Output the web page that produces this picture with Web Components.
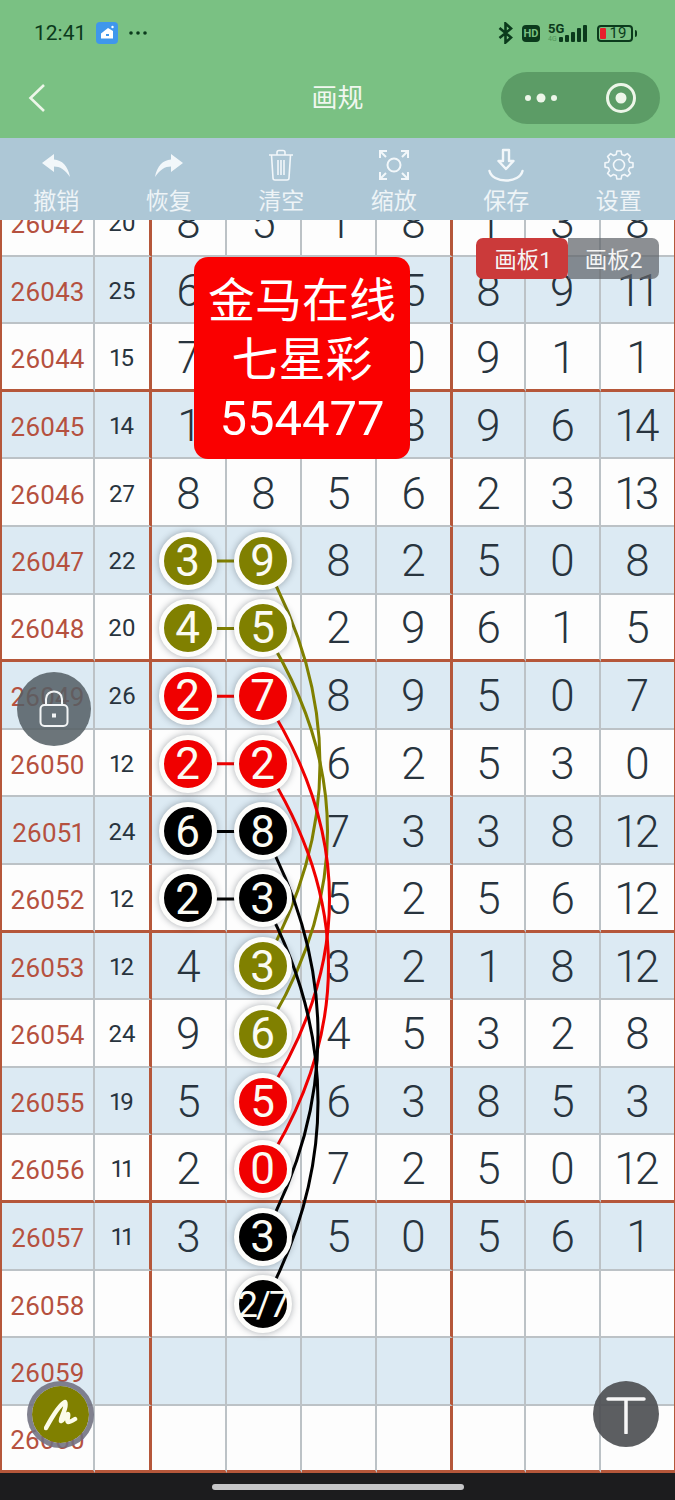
<!DOCTYPE html>
<html lang="zh">
<head>
<meta charset="utf-8">
<title>画规</title>
<style>
  html, body { margin: 0; padding: 0; background: #1c1c1e; }
  body { font-family: Roboto, "Noto Sans CJK SC", sans-serif; }
</style>
</head>
<body>
<draw-page></draw-page>

<script>
const CJK = 'Roboto, "Noto Sans CJK SC", sans-serif'

// olive / red / black marks, in the order they are joined up on the board
const COLORS = { o: "#808000", r: "#f00000", k: "#000000" }

const ROWS = [
  ["26042", "20", "8", "5", "1", "8", "1", "3", "8"],
  ["26043", "25", "6", "", "", "5", "8", "9", "11"],
  ["26044", "15", "7", "", "", "0", "9", "1", "1"],
  ["26045", "14", "1", "", "", "8", "9", "6", "14"],
  ["26046", "27", "8", "8", "5", "6", "2", "3", "13"],
  ["26047", "22", "o3", "o9", "8", "2", "5", "0", "8"],
  ["26048", "20", "o4", "o5", "2", "9", "6", "1", "5"],
  ["26049", "26", "r2", "r7", "8", "9", "5", "0", "7"],
  ["26050", "12", "r2", "r2", "6", "2", "5", "3", "0"],
  ["26051", "24", "k6", "k8", "7", "3", "3", "8", "12"],
  ["26052", "12", "k2", "k3", "5", "2", "5", "6", "12"],
  ["26053", "12", "4", "o3", "3", "2", "1", "8", "12"],
  ["26054", "24", "9", "o6", "4", "5", "3", "2", "8"],
  ["26055", "19", "5", "r5", "6", "3", "8", "5", "3"],
  ["26056", "11", "2", "r0", "7", "2", "5", "0", "12"],
  ["26057", "11", "3", "k3", "5", "0", "5", "6", "1"],
  ["26058", "", "", "k2/7", "", "", "", "", ""],
  ["26059", "", "", "", "", "", "", "", ""],
  ["26060", "", "", "", "", "", "", "", ""]
]

// eight toothed outline for the settings icon
function gearPath(cx, cy, outer, inner) {
  const points = []
  for (let i = 0; i < 8; i++) {
    const a = (i * Math.PI) / 4
    const steps = [[-0.26, inner], [-0.15, outer], [0.15, outer], [0.26, inner]]
    steps.forEach(([offset, r]) => {
      const x = cx + r * Math.sin(a + offset)
      const y = cy - r * Math.cos(a + offset)
      points.push(x.toFixed(1) + " " + y.toFixed(1))
    })
  }
  return "M" + points.join("L") + "Z"
}

class StatusBar extends HTMLElement {
  constructor() {
    super()
    this.attachShadow({ mode: "open" })
    this.shadowRoot.innerHTML = `
      <style>
        :host {
          display: flex;
          align-items: center;
          height: 34px;
          padding: 16px 38px 0 34px;
          color: #0b3a1c;
          font: 400 21px Roboto, sans-serif;
        }
        .left { display: flex; align-items: center; gap: 10px; flex: 1; }
        .right { display: flex; align-items: center; }
        .hd {
          width: 18px; height: 17px; margin: 0 8px 0 9px;
          border-radius: 4px; background: #0b3a1c; color: #7bc184;
          font: 700 11px/17px Roboto, sans-serif; text-align: center;
        }
        .net {
          display: flex; flex-direction: column; width: 11px; height: 20px;
          font: 700 13px/12px Roboto, sans-serif; white-space: nowrap;
        }
        .net small { font: 400 7px/8px Roboto, sans-serif; color: #4f9559; }
        .batt {
          position: relative; width: 32px; height: 13px; margin-left: 10px;
          border: 2px solid #0b3a1c; border-radius: 4px;
          font: 400 15px/13px Roboto, sans-serif; text-align: center;
          text-indent: 6px;
        }
        .batt i {
          position: absolute; left: 1px; top: 1px; width: 6px; height: 11px;
          background: #e8202c; border-radius: 1px;
        }
        .tip { width: 2px; height: 7px; margin-left: 2px; background: #0b3a1c; border-radius: 0 2px 2px 0; }
      </style>
      <div class="left">
        <span>12:41</span>
        <svg width="22" height="22" viewBox="0 0 22 22">
          <rect width="22" height="22" rx="4" fill="#3f97ec"/>
          <path d="M5 11.500 12 6l5 3v7.500H5z" fill="#fff"/>
          <rect x="10" y="12" width="3" height="2" fill="#3f97ec"/>
          <circle cx="16.500" cy="5" r="1.200" fill="#fff"/>
        </svg>
        <svg width="20" height="6" viewBox="0 0 20 6" fill="#0b3a1c">
          <circle cx="3" cy="3" r="1.800"/><circle cx="10" cy="3" r="1.800"/><circle cx="17" cy="3" r="1.800"/>
        </svg>
      </div>
      <div class="right">
        <svg width="15" height="22" viewBox="0 0 15 22" fill="none" stroke="#0b3a1c" stroke-width="2.600">
          <path d="M1.500 6 13 15.500 7.500 20.500V1.500L13 6.500 1.500 16"/>
        </svg>
        <span class="hd">HD</span>
        <span class="net">5G<small>4G</small></span>
        <svg width="28" height="17" viewBox="0 0 28 17" fill="#0b3a1c">
          <rect x="0" y="12" width="4" height="5" rx="1"/>
          <rect x="6" y="10" width="4" height="7" rx="1"/>
          <rect x="12" y="7" width="4" height="10" rx="1"/>
          <rect x="18" y="3" width="4" height="14" rx="1"/>
          <rect x="24" y="0" width="4" height="17" rx="1"/>
        </svg>
        <span class="batt"><i></i>19</span>
        <span class="tip"></span>
      </div>
    `
  }
}

class NavBar extends HTMLElement {
  constructor() {
    super()
    this.attachShadow({ mode: "open" })
    this.shadowRoot.innerHTML = `
      <style>
        :host {
          display: flex;
          align-items: center;
          justify-content: space-between;
          height: 52px;
          padding: 22px 15px 14px 28px;
          position: relative;
        }
        .title {
          position: absolute; left: 0; right: 0; text-align: center;
          font: 400 26px/50px ${CJK}; color: #f0f7ef;
        }
        .capsule {
          display: flex; align-items: center; justify-content: space-between;
          width: 159px; height: 52px; box-sizing: border-box; padding: 0 23px;
          border-radius: 26px; background: #5c9c66;
        }
      </style>
      <svg width="18" height="30" viewBox="0 0 18 30" fill="none" stroke="#edf6e9" stroke-width="2.600">
        <path d="M16 2 2.500 15 16 28"/>
      </svg>
      <span class="title">画规</span>
      <div class="capsule">
        <svg width="34" height="12" viewBox="0 0 34 12" fill="#edf6e9">
          <circle cx="4" cy="6" r="3"/><circle cx="17" cy="6" r="4.500"/><circle cx="30" cy="6" r="3"/>
        </svg>
        <svg width="32" height="32" viewBox="0 0 32 32">
          <circle cx="16" cy="16" r="13.500" fill="none" stroke="#edf6e9" stroke-width="3"/>
          <circle cx="16" cy="16" r="5.500" fill="#edf6e9"/>
        </svg>
      </div>
    `
  }
}

class ToolItem extends HTMLElement {
  constructor() {
    super()
    this.attachShadow({ mode: "open" })
    this.shadowRoot.innerHTML = `
      <style>
        :host {
          display: flex;
          flex-direction: column;
          align-items: center;
          color: #eef4f7;
          font: 400 23px/28px ${CJK};
        }
        .icon { display: flex; align-items: center; justify-content: center; height: 36px; margin-bottom: 5px; }
      </style>
      <div class="icon"><slot name="icon"></slot></div>
      <slot></slot>
    `
  }
}

class ToolBar extends HTMLElement {
  constructor() {
    super()
    this.attachShadow({ mode: "open" })
    this.shadowRoot.innerHTML = `
      <style>
        :host {
          display: grid;
          grid-template-columns: repeat(6, 1fr);
          height: 82px;
          box-sizing: border-box;
          padding-top: 9px;
          background: #adc7d6;
        }
      </style>
      <tool-item>
        <svg slot="icon" width="28" height="23" viewBox="0 0 28 23" fill="#f2f7fa">
          <path d="M0 9 12 0v5.500C20 6 26 12 28 23 23 15.500 18 12.500 12 12.500V18z"/>
        </svg>
        撤销
      </tool-item>
      <tool-item>
        <svg slot="icon" width="28" height="23" viewBox="0 0 28 23" fill="#f2f7fa">
          <path d="M28 9 16 0v5.500C8 6 2 12 0 23 5 15.500 10 12.500 16 12.500V18z"/>
        </svg>
        恢复
      </tool-item>
      <tool-item>
        <svg slot="icon" width="26" height="32" viewBox="0 0 26 32" fill="none" stroke="#f2f7fa" stroke-width="1.600">
          <path d="M1 6h24M9 6V3.500C9 2 10 1.500 11 1.500h4c1 0 2 .5 2 2V6M3.500 6 5 29c0 1 1 2 2 2h12c1 0 2-1 2-2l1.500-23M10 11v15M13 11v15M16 11v15"/>
        </svg>
        清空
      </tool-item>
      <tool-item>
        <svg slot="icon" width="30" height="30" viewBox="0 0 30 30" fill="none" stroke="#f2f7fa" stroke-width="2">
          <circle cx="15" cy="15" r="6.500"/>
          <path d="M1 8V1h7M1 1l6 6M29 8V1h-7M29 1l-6 6M1 22v7h7M1 29l6-6M29 22v7h-7M29 29l-6-6"/>
        </svg>
        缩放
      </tool-item>
      <tool-item>
        <svg slot="icon" width="36" height="34" viewBox="0 0 36 34" fill="none" stroke="#f2f7fa" stroke-width="2.400" stroke-linecap="round" stroke-linejoin="round">
          <path d="M15 2h6v11h4.500L18 21l-7.500-8H15zM1.500 23C3 29 10 32.500 18 32.500S33 29 34.500 23"/>
        </svg>
        保存
      </tool-item>
      <tool-item>
        <svg slot="icon" width="30" height="30" viewBox="0 0 30 30" fill="none" stroke="#f2f7fa" stroke-width="1.600" stroke-linejoin="round">
          <circle cx="15" cy="15" r="5.500"/>
          <path d="${gearPath(15, 15, 14.2, 11)}"/>
        </svg>
        设置
      </tool-item>
    `
  }
}

class BallMark extends HTMLElement {
  constructor() {
    super()
    this.attachShadow({ mode: "open" })
    this.shadowRoot.innerHTML = `
      <style>
        :host {
          display: flex;
          flex: none;
          align-items: center;
          justify-content: center;
          position: relative;
          z-index: 2;
          width: 58px;
          height: 58px;
          margin: 2px 0 0 -2px;
          box-sizing: border-box;
          padding-top: 1px;
          border: 5px solid #fdfdfb;
          border-radius: 50%;
          box-shadow: 0 0 7px rgba(40, 50, 60, .4);
          background: var(--ball, #000);
          color: #fbfbf3;
          font: 400 44px/1 Roboto, sans-serif;
        }
        :host([small]) { font-size: 36px; letter-spacing: -2px; }
      </style>
      <slot></slot>
    `
  }
}

class DrawBoard extends HTMLElement {
  constructor() {
    super()
    this.attachShadow({ mode: "open" })
    this.shadowRoot.innerHTML = `
      <style>
        :host {
          display: block;
          flex: 1;
          position: relative;
          overflow: hidden;
          background: #fdfdfd;
        }
        #rows {
          margin-top: -31px;
          display: grid;
          grid-template-columns: 93px 57px 75px 75px 75px 76px 73px 75px 1fr;
          grid-auto-rows: 67.600px;
          border-left: 2px solid #b5573a;
          border-right: 1px solid #b5573a;
          box-sizing: border-box;
          width: 675px;
        }
        .cell {
          display: flex;
          align-items: center;
          justify-content: center;
          box-sizing: border-box;
          border-right: 2px solid #bcc2c6;
          border-bottom: 2px solid #bcc2c6;
          color: #28343e;
          font: 300 44px/1 Roboto, sans-serif;
          font-variant-numeric: proportional-nums;
          min-width: 0;
        }
        .text { padding-top: 3px; }
        .blue { background: #dceaf3; }
        .period { color: #b5513f; font-size: 26px; font-weight: 400; padding-top: 5px; }
        .sum { font-size: 24px; font-weight: 400; }
        .thick-right { border-right: 3px solid #b5573a; }
        .thick-bottom { border-bottom: 3px solid #b5573a; }
        .no-right { border-right: none; }
        svg {
          position: absolute;
          left: 0;
          top: 0;
          z-index: 1;
          pointer-events: none;
        }
        .tabs {
          position: absolute;
          left: 476px;
          top: 18px;
          z-index: 3;
          display: flex;
          color: #f5f5f5;
          font: 400 22.500px/45px ${CJK};
          text-align: center;
        }
        .on { width: 92px; height: 41px; padding-left: 2px; box-sizing: border-box; background: #cb3a3a; border-radius: 7px; }
        .off { width: 91px; height: 41px; background: rgba(96, 100, 106, .72); border-radius: 0 7px 7px 0; }
        .banner {
          position: absolute;
          left: 194px;
          top: 37px;
          z-index: 3;
          width: 216px;
          height: 202px;
          box-sizing: border-box;
          padding-top: 14px;
          border-radius: 14px;
          background: #fa0000;
          color: #fff;
          font: 400 47px/59px ${CJK};
          text-align: center;
        }
        .banner span { font-size: 49px; }
        .float {
          position: absolute;
          z-index: 4;
          display: flex;
          align-items: center;
          justify-content: center;
          box-sizing: border-box;
          border-radius: 50%;
        }
        .float svg { position: static; }
        .lock { left: 17px; top: 452px; width: 74px; height: 74px; background: rgba(84, 94, 100, .86); }
        .pen {
          left: 27px; top: 1161px; width: 67px; height: 67px;
          background: #808000; background-clip: padding-box;
          border: 5px solid rgba(112, 112, 128, .88);
        }
        .top { left: 593px; top: 1161px; width: 66px; height: 66px; background: rgba(78, 80, 84, .92); }
      </style>
      <div id="rows"></div>
      <svg id="lines" width="675" height="1253" viewBox="0 220 675 1253" fill="none" stroke-width="3"></svg>
      <div class="banner">金马在线<br>七星彩<br><span>554477</span></div>
      <div class="tabs"><span class="on">画板1</span><span class="off">画板2</span></div>
      <div class="float lock">
        <svg width="30" height="38" viewBox="0 0 30 38" fill="none" stroke="#f2f4f5" stroke-width="2">
          <path d="M7 15V9c0-10 16-10 16 0v6"/>
          <rect x="1.500" y="15" width="27" height="21" rx="4"/>
          <rect x="13" y="23.500" width="4" height="4" fill="#f2f4f5" stroke="none"/>
        </svg>
      </div>
      <div class="float pen">
        <svg width="34" height="32" viewBox="0 0 34 32" fill="none" stroke="#fbfbe8" stroke-width="4.500" stroke-linecap="round" stroke-linejoin="round">
          <path d="M2 29C8 18 15 6 21 3c3 5-5 16-4 19 3-1 5-7 7-7 1 3-2 6 0 8 2 0 4-1 7-3"/>
        </svg>
      </div>
      <div class="float top">
        <svg width="40" height="40" viewBox="0 0 40 40" fill="none" stroke="#f7f7f7" stroke-width="3.500" stroke-linecap="round">
          <path d="M2 5h36M20 5v34"/>
        </svg>
      </div>
    `
  }

  connectedCallback() {
    const rows = this.shadowRoot.getElementById("rows")
    ROWS.forEach((row, i) => {
      row.forEach((value, col) => {
        const cell = document.createElement("div")
        cell.className = "cell"
        if (i % 2 === 1) cell.classList.add("blue")
        if (col === 0) cell.classList.add("period")
        if (col === 1) cell.classList.add("sum")
        if (col === 1 || col === 5) cell.classList.add("thick-right")
        if (col === 8) cell.classList.add("no-right")
        if ((i + 2) % 4 === 0 || i === ROWS.length - 1) cell.classList.add("thick-bottom")

        if (col > 1 && COLORS[value[0]]) {
          const ball = document.createElement("ball-mark")
          ball.style.setProperty("--ball", COLORS[value[0]])
          ball.textContent = value.slice(1)
          if (value.length > 2) ball.setAttribute("small", "")
          cell.appendChild(ball)
        } else {
          cell.classList.add("text")
          cell.textContent = value
        }
        rows.appendChild(cell)
      })
    })
    this.drawLines()
  }

  drawLines() {
    const svg = this.shadowRoot.getElementById("lines")
    const rowY = (period) => 561 + (period - 26047) * 67.6
    let html = ""

    // short joins between the two balls of a row
    const joins = [[26047, "o"], [26048, "o"], [26049, "r"], [26050, "r"], [26051, "k"], [26052, "k"]]
    joins.forEach(([period, c]) => {
      html += `<path d="M188 ${rowY(period)}H263" stroke="${COLORS[c]}"/>`
    })

    // long arcs from a ball to the same coloured ball six rows below
    const arcs = [
      [26047, 26053, "o", 377],
      [26048, 26054, "o", 392],
      [26049, 26055, "r", 396],
      [26050, 26056, "r", 394],
      [26051, 26057, "k", 373],
      [26052, 26058, "k", 373]
    ]
    arcs.forEach(([from, to, c, ctrl]) => {
      const y1 = rowY(from)
      const y2 = rowY(to)
      html += `<path d="M263 ${y1}Q${ctrl} ${(y1 + y2) / 2} 263 ${y2}" stroke="${COLORS[c]}"/>`
    })
    svg.innerHTML = html
  }
}

class DrawPage extends HTMLElement {
  constructor() {
    super()
    this.attachShadow({ mode: "open" })
    this.shadowRoot.innerHTML = `
      <style>
        :host {
          display: flex;
          flex-direction: column;
          width: 675px;
          height: 1500px;
          overflow: hidden;
        }
        header { background: #7ac183; height: 138px; box-sizing: border-box; }
        footer {
          display: flex;
          justify-content: center;
          align-items: center;
          height: 27px;
          flex: none;
          background: #1c1c1e;
        }
        footer i { width: 252px; height: 6px; border-radius: 3px; background: #c6c6c8; }
      </style>
      <header>
        <status-bar></status-bar>
        <nav-bar></nav-bar>
      </header>
      <tool-bar></tool-bar>
      <draw-board></draw-board>
      <footer><i></i></footer>
    `
  }
}

customElements.define("status-bar", StatusBar)
customElements.define("nav-bar", NavBar)
customElements.define("tool-item", ToolItem)
customElements.define("tool-bar", ToolBar)
customElements.define("ball-mark", BallMark)
customElements.define("draw-board", DrawBoard)
customElements.define("draw-page", DrawPage)
</script>
</body>
</html>
